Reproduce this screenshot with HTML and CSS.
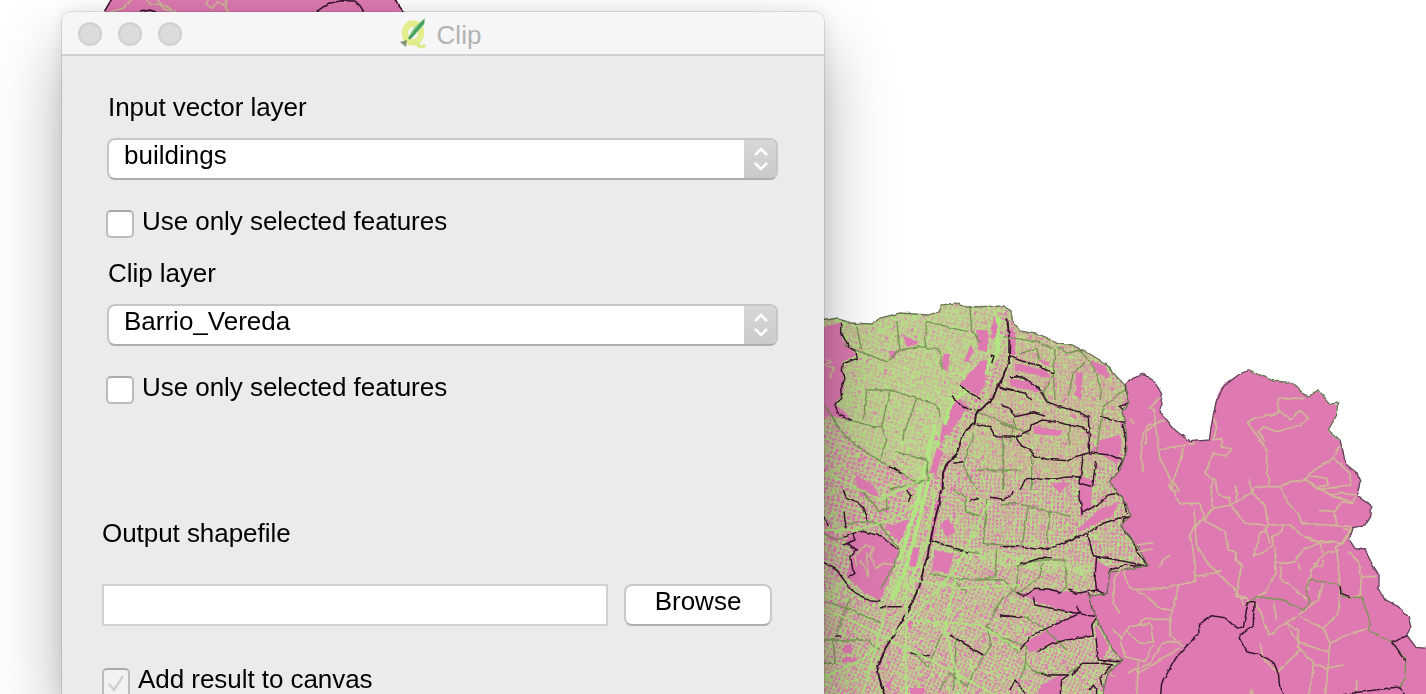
FILE: index.html
```html
<!DOCTYPE html>
<html lang="en">
<head>
<meta charset="utf-8">
<title>Clip</title>
<link rel="stylesheet" href="styles.css">
</head>
<body>
<svg class="map" width="1426" height="694" viewBox="0 0 1426 694">
  <defs>
    <filter id="survey" filterUnits="userSpaceOnUse" x="-10" y="-10" width="1460" height="724" color-interpolation-filters="sRGB">
      <feTurbulence type="fractalNoise" baseFrequency=".13" numOctaves="2" seed="4"/>
      <feDisplacementMap in="SourceGraphic" scale="3.5" xChannelSelector="R" yChannelSelector="G"/>
    </filter>
    <pattern id="gw" width="5" height="4.5" patternUnits="userSpaceOnUse" patternTransform="rotate(16)"><path class="thin" d="M0 1H5M1 0V4.5"/></pattern>
    <pattern id="gs" width="4" height="4" patternUnits="userSpaceOnUse" patternTransform="rotate(24)"><path class="thin" d="M0 1H4M1 0V4"/></pattern>
    <pattern id="ge" width="4" height="4" patternUnits="userSpaceOnUse" patternTransform="rotate(3)"><path class="thin" d="M0 1H4M1 0V4"/></pattern>
    <clipPath id="city"><path id="cityShape" d="M820 321L838 318L850 323L872 324L880 318L900 313L928 315L938 312L942 305L955 303L967 307L1003 306L1011 311L1013 323L1020 331L1040 335L1060 343L1072 345L1090 354L1106 364L1116 376L1126 386L1128 402L1122 412L1126 425L1127 450L1120 470L1110 482L1124 500L1131 516L1121 525L1137 545L1148 566L1110 572L1107 594L1088 596L1097 620L1113 650L1123 660L1108 672L1100 704H820Z"/></clipPath>
  </defs>
  <g filter="url(#survey)">
  <path class="land" d="M104 12L113 -6H393L404 12V30H104Z"/>
  <g transform="translate(50) scale(.33333)">
    <path class="road" d="M180 36L220 25L243 0V-20M290 0L305 12L330 14L345 28L375 34M318 0L340 15L365 28M475 0L468 15L490 22L500 5L520 15L530 0L528 20L538 36"/>
    <path class="edge" d="M162 36L190 -10M270 36L300 30L318 36M795 38L835 10L875 2L915 3L930 17L942 36M1032 -10L1045 16L1062 36"/>
  </g>

  <path class="land" d="M820 321L838 318L850 323L872 324L880 318L900 313L928 315L938 312L942 305L955 303L967 307L1003 306L1011 311L1013 323L1020 331L1040 335L1060 343L1072 345L1090 354L1106 364L1116 376L1125 385L1130 379L1143 375L1155 382L1162 395L1160 411L1175 430L1190 441L1209 440L1212 417L1217 396L1224 384L1238 375L1250 370L1273 381L1292 383L1307 397L1318 391L1330 404L1337 405L1336 417L1328 431L1340 441L1346 464L1357 474L1360 482L1357 496L1371 505L1371 517L1365 526L1353 527L1349 541L1355 548L1365 550L1372 563L1379 575L1379 590L1385 600L1398 606L1408 616L1411 627L1407 635L1416 647L1446 650V714H820Z"/>

  <g clip-path="url(#city)">
    <path fill="url(#gw)" d="M820 300H1010L1004 370L950 450L912 600L820 600Z"/>
    <path fill="url(#ge)" d="M1010 300L1004 370L950 450L930 560L1150 580V300Z"/>
    <path fill="url(#gs)" d="M820 590L928 540L1150 575V704H820Z"/>
    <path class="haze" d="M820 318L942 305L1005 306L1003 355L950 400L930 480L900 475L870 455L850 435L820 410Z"/>
    <path class="haze tan" d="M1011 325L1070 345L1120 385L1127 450L1090 475L1010 480L960 450L1000 370Z"/>
    <g id="blocks"></g>
    <path class="artery" d="M998 318L998 350L978 385L952 400L940 440L926 490L909 560L892 600M935 425L918 500L900 560"/>
    <g class="land">
      <path d="M820 328L842 322L842 340L857 355L842 362L844 390L835 404L853 420L820 415Z"/>
      <path d="M976 330L988 330L987 352L978 350ZM994 318L998 325L995 338L990 338ZM980 361L987 360L985 384L978 396L960 384ZM970 345L974 352L964 365ZM944 354L950 354L947 372L941 366ZM902 335L920 343L908 347ZM855 473L875 487L880 500L860 496ZM887 352L898 352L894 358ZM955 398L968 406L949 435L944 434ZM943 423L947 427L942 443L939 440ZM937 447L943 452L937 472L929 474Z"/>
      <path d="M845 540L860 531L886 539L899 552L889 580L880 601L863 592L846 576L854 552ZM885 527L909 520L900 542ZM934 550L954 554L948 573L932 570ZM940 525L948 519L956 532L946 537ZM913 548L920 546L916 567L909 566ZM903 627L920 609L910 628ZM844 645L852 645L852 653H844ZM842 657L858 657L858 662L842 662ZM1091 450L1101 440L1120 435L1121 448L1117 465L1104 456ZM1076 530L1100 510L1120 500L1113 515L1085 530ZM822 530L843 540L830 541ZM884 686L892 678L890 691ZM910 688H925L922 700H910Z"/>
      <path d="M1020 594L1040 589L1089 594L1096 618L1076 614L1035 601ZM1025 643L1075 613L1094 617L1090 638L1060 640L1030 652ZM1096 560L1110 568L1108 594L1095 590ZM1080 476L1093 480L1090 510L1080 515ZM1095 622L1108 645L1104 660L1097 656ZM1040 685L1062 675L1060 704L1035 704ZM1009 327L1016 333L1015 355L1010 355ZM1037 360L1050 362L1048 367ZM1076 370L1083 375L1080 400L1075 395ZM1015 363L1045 370L1050 378L1015 370ZM1010 379L1032 381L1040 392L1010 386ZM1034 427L1063 430L1060 436L1034 434ZM1090 360L1105 366L1111 377L1098 374ZM1052 484L1068 482L1060 494Z"/>
    </g>
    <path class="road" transform="translate(820 290) scale(.33333)" d="M10 205L35 215L15 225L40 235L30 265M110 825L105 800L135 765L160 775L148 795L170 835L190 820L225 825M140 790L145 860L120 810"/>
    <g transform="translate(820 290) scale(.33333)">
      <path class="district" d="M70 165L120 185L200 215L240 180L300 170L360 180L365 240M315 175L320 95L440 125M230 90L240 180M110 110L125 180M15 345L70 435L150 495L240 550L300 580M70 385L160 410L185 410L210 300L290 325M210 300L140 300M185 410L200 450L180 510M245 450L290 325L350 345L360 380M225 485L320 510M130 390L140 300M320 510L325 570L210 600M450 50L455 120L480 160M460 360L580 410L570 460M460 430L430 530L470 600M550 440V600M470 540H600"/>
      <path class="edge" d="M65 97L65 130L85 170L108 185L112 205L70 220L67 240L75 265L62 300L65 325L45 345L55 370L95 390M512 195L522 198L515 220M420 285L445 305L482 328M395 320L425 345L452 362M570 260H600M530 285L548 295L600 305M470 402L510 410L525 440L585 442M400 520L430 515M210 530L245 550"/>
      <path class="edge heavy" d="M562 85L568 150L567 210L550 260L530 295L519 325L494 348L468 372L465 398L440 420L425 445L410 492L382 520L369 548L368 600"/>
    </g>
    <g transform="translate(1000 290) scale(.33333)">
      <path class="district" d="M10 140L110 155L165 180L160 250L130 310L150 345M60 190L110 175L120 210M170 170L200 190L240 180M240 180L280 230L305 300L300 330M0 400L45 415L90 430M160 250L165 330M205 320L220 250L255 215M50 420L40 390L55 370M205 465L210 410M10 440V600M95 490V600M290 485L300 410L310 350L380 295"/>
      <path class="edge" d="M30 200L65 213L110 225L160 250M30 260L65 260L95 280L120 300L140 335L185 352L235 365L265 382L268 440L268 488L225 500L205 512L140 508L105 497L90 480L65 468L48 440L90 420L95 405L130 390L180 398L250 415L275 435M0 345L30 355L45 380L100 368L135 378M0 290L40 300L75 310L95 330M60 600L75 570L125 565L165 568L195 562L240 560M268 488L330 495L365 510M250 490L240 580L278 590L287 510M300 380L350 390L378 400M375 280L380 310L387 335L360 350L378 370L370 410L378 455L375 500L355 535L360 555L335 565"/>
    </g>
    <g transform="translate(820 490) scale(.33333)">
      <path class="district" d="M10 130L50 150L75 140M80 100L155 95L180 105L240 180L220 230L180 300M120 0L180 65L210 50M10 330L60 350L95 360L180 400M400 0L440 20L435 65L490 80M500 30L490 160L600 170M530 180L525 260L480 270M400 180L480 190M330 250L400 265L550 270L600 320M550 320L500 410L600 490M500 410L515 465L490 500L440 590L390 550L360 600M365 430L325 530L275 485M10 450H140L180 480M40 450L45 520L10 520M90 325L60 400L45 440M400 270L440 310M400 600L410 440M200 20V60"/>
      <path class="edge" d="M70 0L78 22L110 35L130 55L142 92M72 65L78 115M12 80L22 108M72 142L120 122L182 138L235 180M70 165L105 150L98 132M78 160L112 178L92 200L98 238L105 250L85 262M12 218L50 240L72 270L95 300L120 318L150 332L178 335M180 350H245M335 150L385 168L445 187M260 0L272 18L265 35M450 32L480 25M510 22L550 28L575 15L580 0M540 378L600 380M390 435L490 495M45 438H62M270 488L330 500"/>
      <path class="edge heavy" d="M363 0L355 50L343 95L332 150L322 200L310 240L298 290L270 350L225 430L195 480L172 528L177 560L200 640"/>
    </g>
    <g transform="translate(1000 490) scale(.33333)">
      <path class="district" d="M0 45L50 40L90 50L180 70L210 80M85 50L65 170M150 60L140 160M55 225L50 290L20 320M50 225L125 210L195 210L200 290L180 310M130 215L120 260L55 310M0 440L80 470L75 530L60 570M75 380L140 420L200 480M80 520L110 550L200 555L250 520"/>
      <path class="edge" d="M0 170L70 170L110 178L150 175L210 150L260 130L310 100L355 85L392 80L370 90L368 115L405 160L410 185L445 230L380 215L280 197L262 132M245 70L290 45L325 15L350 10L370 25L380 70M237 0L247 75M60 220L85 215L120 205H155M290 200L285 265L290 300L230 310L205 300M440 230L375 225L330 240L328 285L320 315L290 300M265 310L275 350L290 380L230 370L105 345L100 320M50 310L70 320L110 295L150 298L185 310M230 350L240 370L150 410L90 440L60 480M110 485L155 460L200 450L280 438L275 405L290 382L350 388L365 385L355 400L320 410L330 440L345 480L372 512L350 515L295 510L288 445M335 525L300 565L308 590M215 555L250 520L300 520L340 525M120 555L205 555L185 570L180 620M0 375L55 382L70 380M30 600L45 570L75 610M270 600L280 585L290 600V620"/>
    </g>
    <path class="main" d="M820 530L860 530L890 520L925 500M820 607L850 620L890 640L950 670L1010 704M820 680L860 660L910 620L955 570L990 500M910 580L960 588L1020 585M905 620L980 625L1020 650M860 704L886 610M906 600V704M955 580L945 630L965 704M820 470L880 500L920 480M935 490L928 540L900 605"/>
  </g>
  <use href="#cityShape" class="rim"/>

  <g transform="translate(1110 350) scale(.33333)">
    <path class="road" d="M150 140L120 175L135 180V225L100 250L92 320L100 370M135 220L145 300L150 325L180 385L190 420L207 460L270 460L280 505L255 530L260 585L290 635L380 725L405 765M165 210L110 230L108 285M60 205L70 220M150 298L225 285L205 350L188 395L208 418L190 425L175 400M225 285L255 280M308 195L320 230L310 270L335 265L333 290L367 297L345 318L310 310L285 370L315 390L325 435L358 445L362 465L310 475L280 510M310 390L300 410L310 475M362 465L420 430L440 410L510 410L540 395L585 390L670 440L725 455M420 385L425 425L465 470L475 525L405 520L362 465M375 405L382 430L375 455M478 405L470 350V300L440 255L413 220L430 205L505 190V145L580 145M505 180L540 208L572 182L595 205L570 225L500 245L462 230L445 245L465 275M510 410L535 460L565 490L575 520L730 530L700 580L625 575L580 560L540 525L475 525M585 390L605 365L670 325L690 285M670 325L720 370L722 405L680 410L630 420M595 375L650 385L655 405L625 410M605 405L665 435L690 430L740 435L725 460L695 455L675 485L625 480M675 485L680 525M700 535L720 540L695 580L680 590L690 705M280 510L345 545L355 600L380 605L375 630L400 645L385 690L380 740L415 745M520 525L515 545L485 560L490 585L465 605L430 620L440 590L450 550L475 530M465 530L480 580M495 590L498 670L470 720L440 745M500 635L530 640L555 635L580 600L625 580L660 575L690 580M570 660L565 640M690 600L655 605L630 625L605 660L590 710L600 720M630 580L640 610M640 630L635 650L610 640M510 650L515 690L545 710L590 750M715 605L745 635L755 675L750 735L735 740M755 680H800M255 480L255 525L240 555L250 600L255 695L205 705L130 718L70 718L50 700L40 660M70 718L115 740L145 775L185 780M205 705L195 760L180 800V860L210 875L220 890M255 680L335 665M85 825L105 805H180M35 865L60 830L120 820L130 875L90 880L50 845M130 885L105 935L45 920L30 870M80 1052L85 935M55 970L120 940L155 880L215 875M85 970L135 940L210 895M490 755L500 810M415 750L450 780L478 855L525 820L580 785L625 750L640 700M690 720L685 790L640 835L570 800M640 835L660 880L645 1052M660 880L720 850L780 835M525 820L565 840V890L610 940L605 1000L590 1052M530 830L570 880L655 905M570 900L505 965M450 880L460 925L500 965M610 940L650 955L700 945M740 990V1052M415 1042L425 1018L430 1042M0 965L15 980M40 650L15 680L10 760L30 790M5 835L35 865M80 585L130 578M80 605L130 600M145 655L155 635L180 615"/>
    <path class="edge soft" d="M45 105L60 88L100 73L135 95L156 135L150 185L195 240L240 275L298 270L305 220L320 150L342 108L385 75L420 60"/>
    <path class="rim" d="M420 60L490 93L545 98L592 142L625 120L660 162L683 160L680 195L655 240L690 270"/>
    <path class="edge soft" d="M690 270L708 343L740 368L750 396L740 438L785 467L782 500L765 528L730 532L718 570L735 595L765 600L785 640L807 675L807 720L825 750L865 770L895 800L903 832L890 855L918 892L1000 900"/>
    <path class="district" d="M405 765L440 740L520 750L580 780L600 755L585 715L605 687L640 695L690 705L700 740L755 743L780 810L775 840L845 878L887 930L885 985L870 1010"/>
    <path class="edge" d="M150 1052L155 1000L200 920L267 848L265 825L305 797L345 803L380 835L400 830L415 755L432 755L430 825L390 855L388 865L410 905L450 915L490 935L505 970L510 1015L530 1052M690 705L693 730L720 740M845 878L892 857M845 878L887 935M650 1042L750 1026L870 1010L888 1042"/>
  </g>
  </g>
</svg>

<main class="dialog">
  <header class="titlebar">
    <div class="lights"><i></i><i></i><i></i></div>
    <div class="title">
      <svg width="28" height="32" viewBox="0 0 28 32">
        <ellipse cx="13" cy="15" rx="8" ry="9.5" fill="none" stroke="#e3ed8d" stroke-width="6.5"/>
        <path d="M13 23Q17 24 19 28Q22 30 25 27" fill="none" stroke="#dce98a" stroke-width="3.5"/>
        <path d="M8 20L13 11L20 4L25 0L24 7L12 20Z" fill="#85c58a"/>
        <path d="M9 21L24 3" stroke="#439d5a" stroke-width="2.5"/>
        <path d="M0 24L7 22L6 29Z" fill="#82967c"/>
      </svg>
      <span>Clip</span>
    </div>
  </header>
  <form class="form">
    <label class="label">Input vector layer</label>
    <div class="select"><span>buildings</span><b><svg width="16" height="24" viewBox="0 0 16 24"><path d="M2 8L8 2L14 8M2 16L8 22L14 16"/></svg></b></div>
    <div class="check"><i class="box"></i><span>Use only selected features</span></div>
    <label class="label second">Clip layer</label>
    <div class="select"><span>Barrio_Vereda</span><b><svg width="16" height="24" viewBox="0 0 16 24"><path d="M2 8L8 2L14 8M2 16L8 22L14 16"/></svg></b></div>
    <div class="check"><i class="box"></i><span>Use only selected features</span></div>
    <label class="label output">Output shapefile</label>
    <div class="file"><div class="field"></div><div class="button">Browse</div></div>
    <div class="check add"><i class="box off"><svg width="24" height="22" viewBox="0 0 24 22"><path d="M5 14L10 20L19 6"/></svg></i><span>Add result to canvas</span></div>
  </form>
</main>
<script src="map.js"></script>
</body>
</html>
```

FILE: styles.css
```css
* { box-sizing: border-box; }
body {
  position: relative;
  width: 1426px;
  height: 694px;
  margin: 0;
  overflow: hidden;
  background: #fff;
  font: 26px/30px "Liberation Sans", Arial, sans-serif;
  color: #000;
}
.map { display: block; }
.land { fill: #de7ab1; }
.haze { fill: #b9dc8b; opacity: .6; }
.haze.tan { fill: #c6c08f; opacity: .5; }
.map .thin, .road, .edge, .district, .main, .artery, .rim { fill: none; }
.map .thin { stroke: #b7df89; stroke-width: 1.7; opacity: .9; }
.road { stroke: #cfb797; stroke-width: 5; stroke-linejoin: round; }
.edge { stroke: #38172c; stroke-width: 4.5; stroke-linejoin: round; }
.edge.heavy { stroke-width: 6; }
.edge.soft { stroke: #63445a; stroke-width: 4; }
.district { stroke: #779656; stroke-width: 4; }
.main { stroke: #afe47f; stroke-width: 2.2; opacity: .85; }
.artery { stroke: #b3e483; stroke-width: 4; }
.rim { stroke: #687553; stroke-width: 1.3; }
g > path.rim { stroke-width: 4; }
#blocks { opacity: .78; }

.dialog {
  position: absolute;
  top: 12px;
  left: 62px;
  width: 762px;
  height: 682px;
  border-radius: 9px 9px 0 0;
  background: #ebebeb;
  box-shadow: 0 0 0 1px rgba(0, 0, 0, .1), 0 1px 20px rgba(0, 0, 0, .1), 0 36px 70px rgba(0, 0, 0, .3);
}
.titlebar {
  display: grid;
  grid-template-columns: 1fr auto 1fr;
  align-items: center;
  height: 44px;
  padding: 0 16px;
  border-bottom: 2px solid #d1d1d1;
  border-radius: 9px 9px 0 0;
  background: #f6f6f6;
}
.lights { display: flex; gap: 16px; padding-top: 2px; }
.lights i {
  width: 24px;
  height: 24px;
  border: 2px solid #d0d0d0;
  border-radius: 50%;
  background: #dcdcdc;
}
.title { display: flex; align-items: center; gap: 9px; margin-left: -5px; color: #b2b2b2; }
.title span { padding-top: 3px; }
.title svg { margin-top: 2px; }
.form { height: 638px; padding: 36px 46px 0 40px; overflow: hidden; }
.label { display: block; height: 30px; padding-left: 6px; letter-spacing: -.05px; }
.select {
  display: flex;
  width: 671px;
  height: 42px;
  margin: 16px 0 0 5px;
  border: 2px solid #c6c6c6;
  border-bottom-color: #adadad;
  border-radius: 8px;
  background: #fff;
  overflow: hidden;
}
.select span { flex: 1; padding-left: 15px; }
.select b {
  display: flex;
  align-items: center;
  justify-content: center;
  width: 34px;
  margin: -2px -2px -2px 0;
  background: linear-gradient(#d8d8d8, #c9c9c9);
}
.select path { fill: none; stroke: #fff; stroke-width: 2.5; }
.check { display: flex; gap: 8px; margin: 26px 0 0 4px; height: 34px; }
.check span { line-height: 30px; letter-spacing: -.05px; }
.box {
  width: 28px;
  height: 28px;
  margin-top: 4px;
  border: 2px solid #bbb;
  border-top-color: #aaa;
  border-radius: 5px;
  background: #fff;
}
.second { margin-top: 18px; }
.output { margin-top: 112px; padding-left: 0; }
.file { display: flex; gap: 16px; margin-top: 36px; }
.field { width: 506px; height: 42px; border: 2px solid #d2d2d2; background: #fff; }
.button {
  width: 148px;
  height: 42px;
  border: 2px solid #c9c9c9;
  border-bottom-color: #b0b0b0;
  border-radius: 8px;
  background: #fff;
  text-align: center;
  line-height: 31px;
}
.add { height: 30px; margin: 38px 0 0; }
.off { height: 26px; border-bottom: 0; border-radius: 5px 5px 0 0; background: #f2f2f2; }
.off svg { display: block; }
.off path { fill: none; stroke: #d0d0d0; stroke-width: 2.5; }
```

FILE: map.js
```js
// Fills the city with small building footprints and lanes from a fixed seed.
let seed = 73;
const rand = () => (seed = (seed * 16807) % 2147483647) / 2147483647;
const layers = { '#de7ab1': '', '#b4e283': '', '#c9b398': '' };
const colours = Object.keys(layers);
for (let i = 0; i < 15000; i++) {
  const x = 822 + Math.floor(rand() * 326);
  const y = 302 + Math.floor(rand() * 400);
  const r = rand();
  const pinkShare = y < 450 && x < 990 ? .08 : .27;
  const c = r < pinkShare ? colours[0] : r < .68 ? colours[1] : colours[2];
  const w = 1 + Math.floor(rand() * 3);
  const h = 1 + Math.floor(rand() * 3);
  layers[c] += `M${x} ${y}h${w}v${h}h${-w}z`;
}
for (const c of colours) {
  const p = document.createElementNS('http://www.w3.org/2000/svg', 'path');
  p.setAttribute('d', layers[c]);
  p.setAttribute('fill', c);
  document.getElementById('blocks').appendChild(p);
}
```
